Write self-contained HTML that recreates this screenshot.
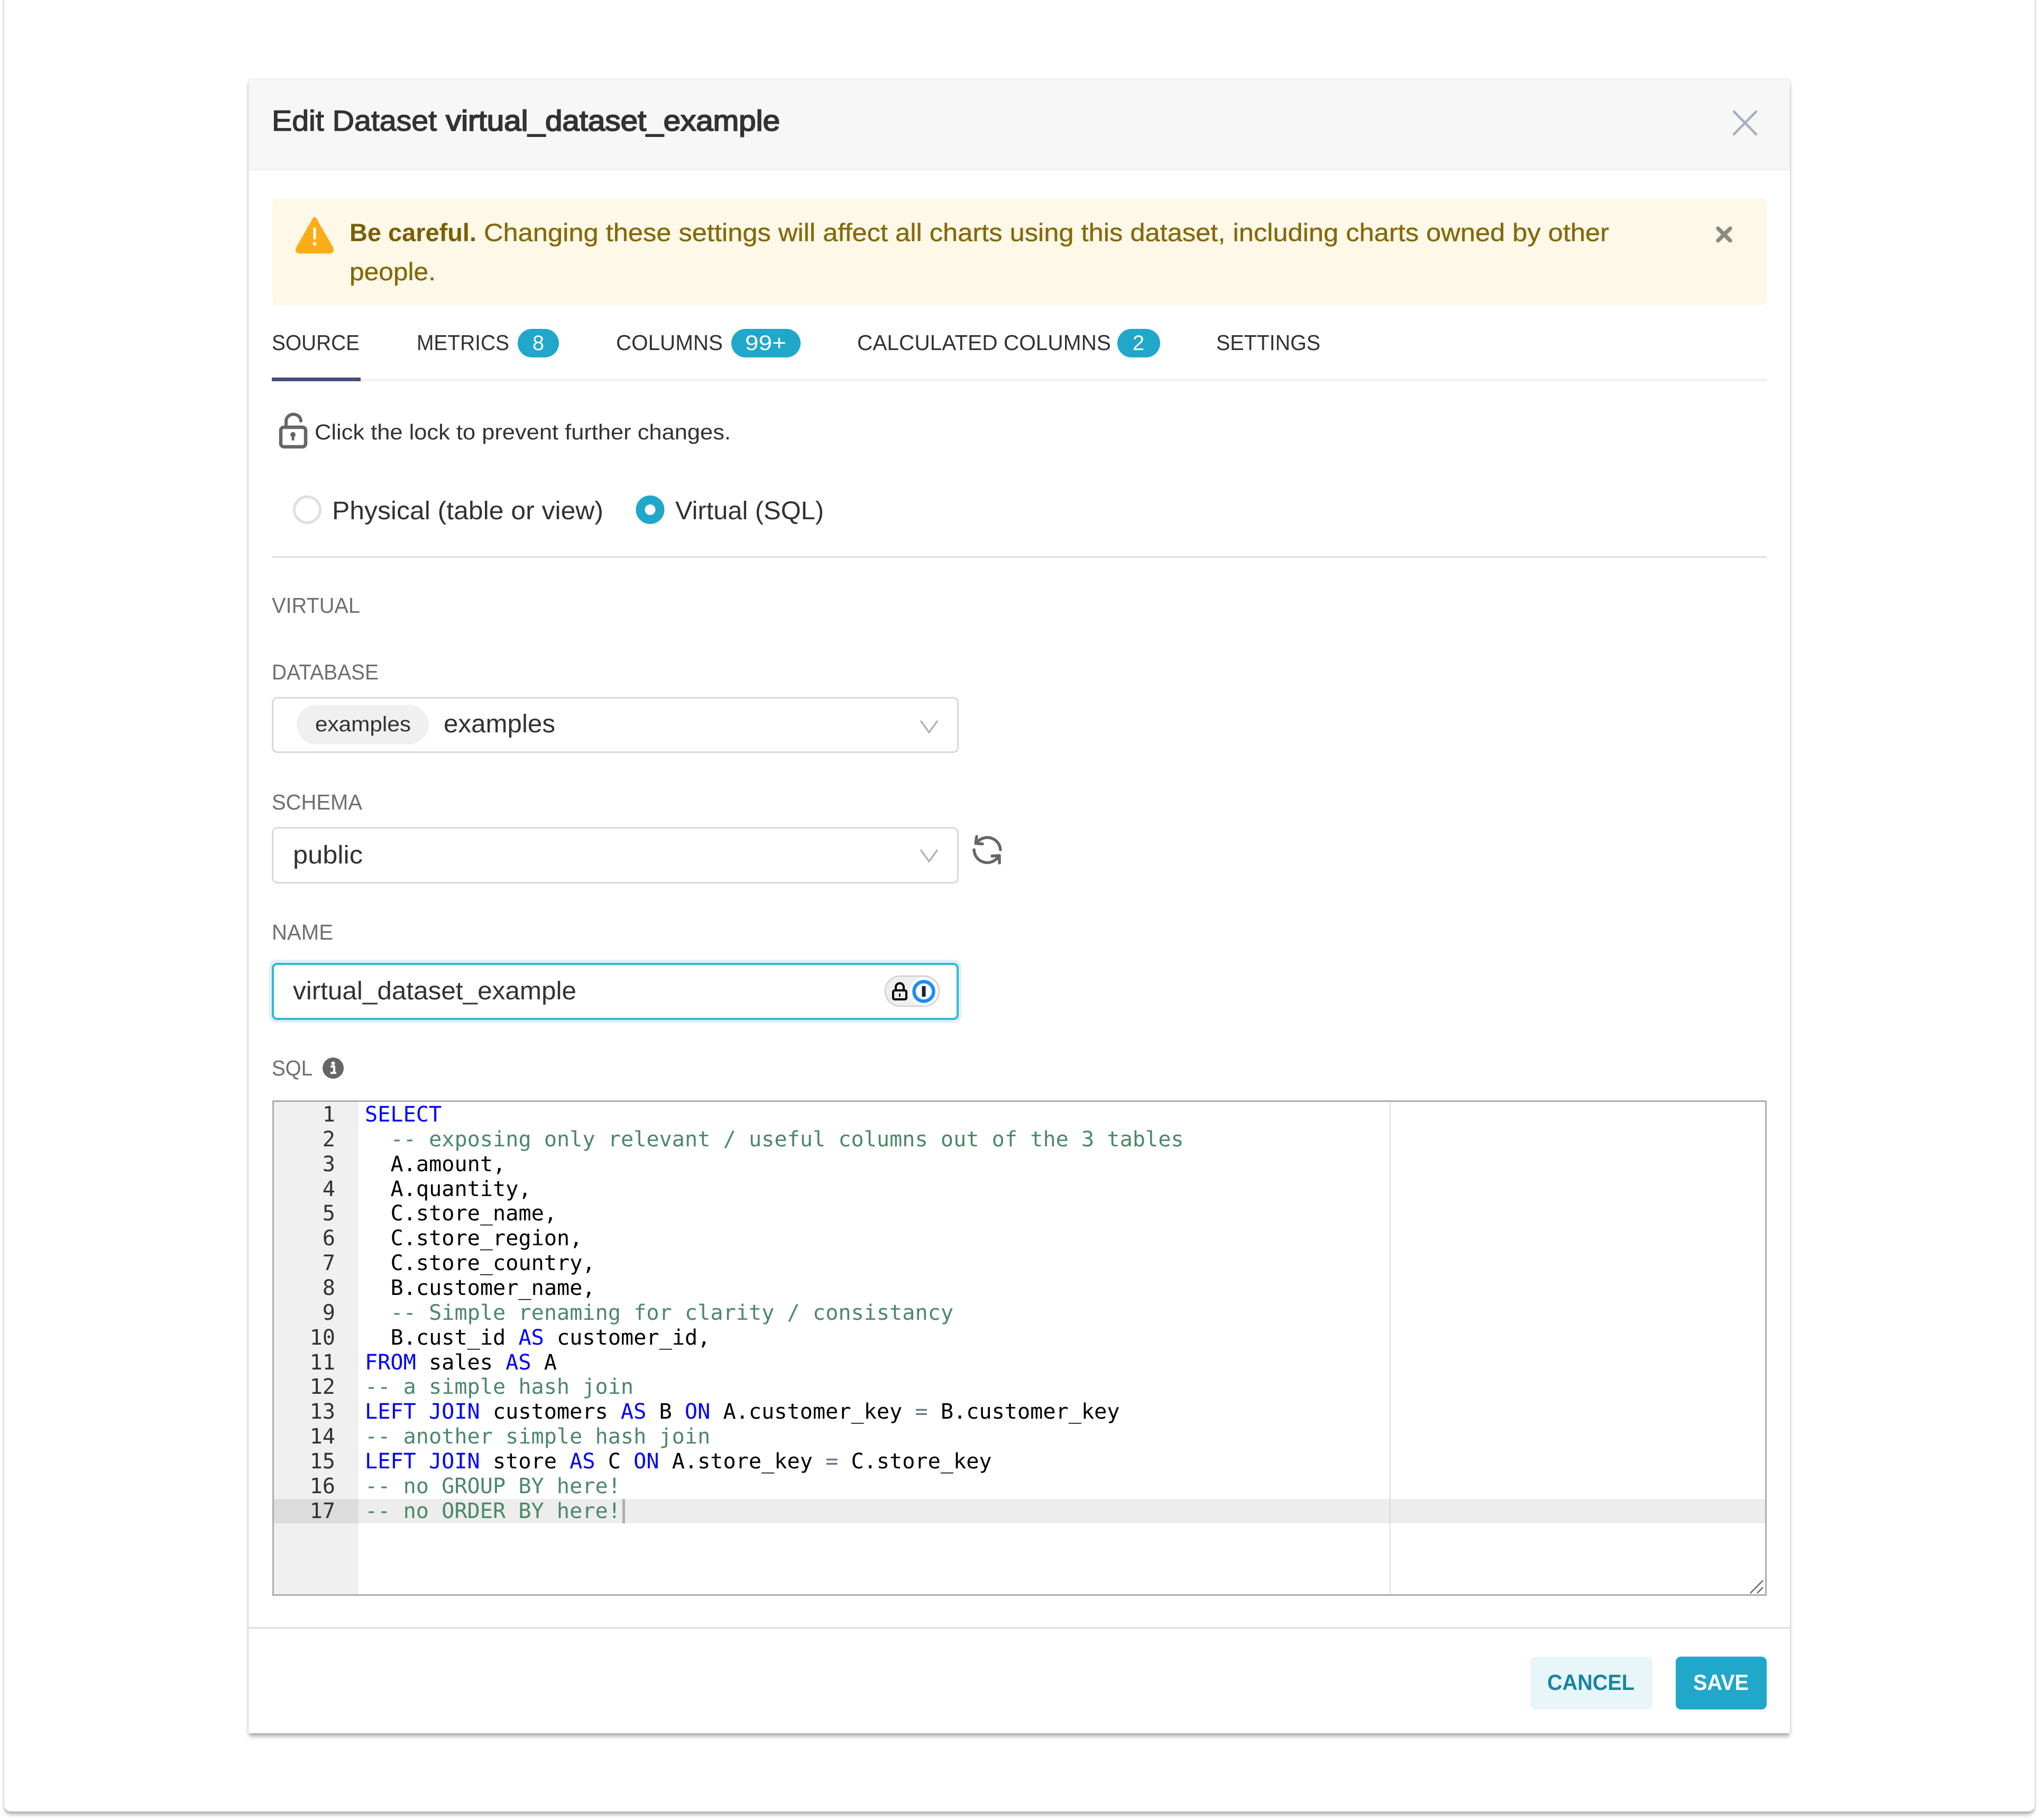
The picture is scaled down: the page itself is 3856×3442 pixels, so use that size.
<!DOCTYPE html>
<html lang="en">
<head>
<meta charset="utf-8">
<title>Edit Dataset virtual_dataset_example</title>
<style>
html,body{margin:0;padding:0;background:#fff;width:3856px;height:3442px;overflow:hidden}
.card{position:absolute;left:8px;top:-20px;width:3840px;height:3446px;background:#fff;border-radius:12px;box-shadow:0 7px 7px -1px rgba(0,0,0,.28),0 0 4px rgba(0,0,0,.18)}
.modal{position:absolute;left:470px;top:150px;width:2915px;height:3128px;background:#fff;box-shadow:0 7px 7px -1px rgba(0,0,0,.3),0 0 4px rgba(0,0,0,.16)}
svg{position:absolute;left:0;top:0;display:block}
text{font-family:"Liberation Sans",sans-serif;white-space:pre}
.mono text{font-family:"DejaVu Sans Mono",monospace;font-size:40.2px;fill:#000}
.mono .c{fill:#4c886b}.mono .k,.k{fill:#0000ff}.o{fill:#687687}
.mono.g text{fill:#333;text-anchor:end}
.lbl{font-size:41px;fill:#6f6f6f}
.tab{font-size:41px;fill:#323232}
.bd{font-size:40px;fill:#fff;text-anchor:middle}
</style>
</head>
<body>
<div class="card"></div>
<div class="modal"></div>
<svg width="3856" height="3442" viewBox="0 0 3856 3442" xmlns="http://www.w3.org/2000/svg">
<!-- header -->
<rect x="470" y="150" width="2915" height="170" fill="#f7f7f7"/>
<rect x="470" y="319" width="2915" height="3" fill="#f0f0f0"/>
<text x="514" y="247" font-size="55" fill="#323232" stroke="#323232" stroke-width="1.400" textLength="312" lengthAdjust="spacingAndGlyphs">Edit Dataset</text>
<text x="843" y="247" font-size="55" fill="#323232" stroke="#323232" stroke-width="2" textLength="632" lengthAdjust="spacingAndGlyphs">virtual_dataset_example</text>
<path d="M3279 211L3321 254M3321 211L3279 254" stroke="#a9adbf" stroke-width="4.500" fill="none" stroke-linecap="round"/>

<!-- alert -->
<rect x="515" y="376" width="2826" height="201" rx="6" fill="#fdf8e7"/>
<path d="M595 414 L627 470 Q629 476 623 476 L567 476 Q561 476 563 470 Z" fill="#fcac17" stroke="#fcac17" stroke-width="7" stroke-linejoin="round"/>
<rect x="592.500" y="430" width="5" height="23" rx="2.500" fill="#fff"/>
<circle cx="595" cy="461" r="3.500" fill="#fff"/>
<text x="661" y="456" font-size="47" font-weight="bold" fill="#7a5f05" textLength="240" lengthAdjust="spacingAndGlyphs">Be careful.</text>
<text x="915" y="456" font-size="47" fill="#85690b" stroke="#85690b" stroke-width=".4" textLength="2128" lengthAdjust="spacingAndGlyphs">Changing these settings will affect all charts using this dataset, including charts owned by other</text>
<text x="661" y="530" font-size="47" fill="#85690b" stroke="#85690b" stroke-width=".4" textLength="163" lengthAdjust="spacingAndGlyphs">people.</text>
<path d="M3249 432L3272 455M3272 432L3249 455" stroke="#8a8a80" stroke-width="7.500" fill="none" stroke-linecap="round"/>

<!-- tabs -->
<text class="tab" x="514" y="662" textLength="166" lengthAdjust="spacingAndGlyphs">SOURCE</text>
<text class="tab" x="788" y="662" textLength="175" lengthAdjust="spacingAndGlyphs">METRICS</text>
<rect x="979" y="622" width="78" height="54" rx="27" fill="#20a7c9"/>
<text class="bd" x="1018" y="662">8</text>
<text class="tab" x="1165" y="662" textLength="202" lengthAdjust="spacingAndGlyphs">COLUMNS</text>
<rect x="1383" y="622" width="131" height="54" rx="27" fill="#20a7c9"/>
<text class="bd" x="1448" y="662" textLength="78" lengthAdjust="spacingAndGlyphs">99+</text>
<text class="tab" x="1621" y="662" textLength="480" lengthAdjust="spacingAndGlyphs">CALCULATED COLUMNS</text>
<rect x="2113" y="622" width="81" height="54" rx="27" fill="#20a7c9"/>
<text class="bd" x="2153" y="662">2</text>
<text class="tab" x="2300" y="662" textLength="197" lengthAdjust="spacingAndGlyphs">SETTINGS</text>
<rect x="515" y="717" width="2826" height="4" fill="#f0f0f0"/>
<rect x="514" y="714" width="168" height="7" fill="#444e7c"/>

<!-- lock row -->
<rect x="531" y="808" width="47" height="37" rx="6" fill="none" stroke="#666" stroke-width="6.500"/>
<path d="M541 806V797a14 13 0 0 1 28 -1" fill="none" stroke="#666" stroke-width="6" stroke-linecap="round"/>
<circle cx="554" cy="822" r="5" fill="#666"/>
<rect x="551.500" y="823" width="5" height="10" fill="#666"/>
<text x="595" y="831" font-size="41" fill="#323232" textLength="787" lengthAdjust="spacingAndGlyphs">Click the lock to prevent further changes.</text>

<!-- radios -->
<circle cx="581" cy="964" r="24.500" fill="#fff" stroke="#e0e0e0" stroke-width="5"/>
<text x="628" y="982" font-size="48" fill="#323232" textLength="513" lengthAdjust="spacingAndGlyphs">Physical (table or view)</text>
<circle cx="1229.500" cy="964" r="18.500" fill="#fff" stroke="#20a7c9" stroke-width="17"/>
<text x="1277" y="982" font-size="48" fill="#323232" textLength="281" lengthAdjust="spacingAndGlyphs">Virtual (SQL)</text>
<rect x="515" y="1052" width="2826" height="3" fill="#e0e0e0"/>

<text class="lbl" x="514" y="1159" textLength="167" lengthAdjust="spacingAndGlyphs">VIRTUAL</text>

<!-- database -->
<text class="lbl" x="514" y="1285" textLength="202" lengthAdjust="spacingAndGlyphs">DATABASE</text>
<rect x="515.500" y="1319.500" width="1296" height="103" rx="9" fill="#fff" stroke="#d9d9d9" stroke-width="3"/>
<rect x="561" y="1333" width="250" height="75" rx="37.500" fill="#f0f0f0"/>
<text x="596" y="1383" font-size="40" fill="#323232" textLength="181" lengthAdjust="spacingAndGlyphs">examples</text>
<text x="839" y="1385" font-size="48" fill="#323232" textLength="211" lengthAdjust="spacingAndGlyphs">examples</text>
<path d="M1741 1363L1757 1385L1773 1363" fill="none" stroke="#b5b5b5" stroke-width="3.500"/>

<!-- schema -->
<text class="lbl" x="514" y="1531" textLength="171" lengthAdjust="spacingAndGlyphs">SCHEMA</text>
<rect x="515.500" y="1565.500" width="1296" height="104" rx="9" fill="#fff" stroke="#d9d9d9" stroke-width="3"/>
<text x="554" y="1633" font-size="48" fill="#323232" textLength="132" lengthAdjust="spacingAndGlyphs">public</text>
<path d="M1741 1607L1757 1629L1773 1607" fill="none" stroke="#b5b5b5" stroke-width="3.500"/>
<g fill="none" stroke="#666" stroke-width="5.500" stroke-linecap="round" stroke-linejoin="round">
<path d="M1847 1594A25 25 0 0 1 1892 1607"/>
<path d="M1847 1582L1845 1595L1858 1596"/>
<path d="M1842 1607A25 25 0 0 0 1888 1620"/>
<path d="M1876 1619L1890 1618L1890 1632"/>
</g>

<!-- name -->
<text class="lbl" x="514" y="1777" textLength="116" lengthAdjust="spacingAndGlyphs">NAME</text>
<rect x="509" y="1815" width="1309" height="119" rx="14" fill="#dff1f5"/>
<rect x="516" y="1823" width="1295" height="104" rx="8" fill="#fff" stroke="#33b8d6" stroke-width="4"/>
<text x="554" y="1890" font-size="48" fill="#323232" textLength="536" lengthAdjust="spacingAndGlyphs">virtual_dataset_example</text>
<rect x="1674" y="1846" width="102" height="57" rx="28.500" fill="#efefef" stroke="#d0d0d0" stroke-width="2.500"/>
<circle cx="1747" cy="1875" r="27" fill="#fff"/>
<rect x="1689" y="1873" width="25" height="17" rx="3" fill="none" stroke="#000" stroke-width="4"/>
<path d="M1694 1872V1867a7.500 7.500 0 0 1 15 0V1872" fill="none" stroke="#000" stroke-width="4"/>
<rect x="1700" y="1879" width="3" height="6" fill="#000"/>
<circle cx="1747" cy="1875" r="18.500" fill="#fff" stroke="#1a8cff" stroke-width="6.500"/>
<rect x="1743.500" y="1865" width="7" height="20" fill="#222"/>

<!-- sql label -->
<text class="lbl" x="514" y="2034" textLength="77" lengthAdjust="spacingAndGlyphs">SQL</text>
<circle cx="630" cy="2020" r="20" fill="#666"/>
<circle cx="630" cy="2011" r="3.500" fill="#fff"/>
<path d="M625 2017H632V2028M625 2029H636" fill="none" stroke="#fff" stroke-width="4"/>

<!-- editor -->
<rect x="518" y="2084" width="2820" height="931" fill="#fff"/>
<rect x="518" y="2084" width="160" height="931" fill="#f0f0f0"/>
<rect x="678" y="2835" width="2660" height="46" fill="#ededed"/>
<rect x="518" y="2835" width="160" height="46" fill="#dcdcdc"/>
<rect x="2627" y="2084" width="3" height="931" fill="#e8e8e8"/>
<rect x="2627" y="2835" width="3" height="46" fill="#dcdcdc"/>
<rect x="1177" y="2835" width="5" height="46" fill="#aeaeae"/>
<rect x="516.500" y="2082.500" width="2823" height="934" fill="none" stroke="#adadad" stroke-width="3"/>
<path d="M3310 3013L3334 2989M3323 3013L3334 3002" stroke="#666" stroke-width="2.500" fill="none"/>

<g class="mono g">
<text x="634" y="2121">1</text>
<text x="634" y="2168">2</text>
<text x="634" y="2215">3</text>
<text x="634" y="2262">4</text>
<text x="634" y="2308">5</text>
<text x="634" y="2355">6</text>
<text x="634" y="2402">7</text>
<text x="634" y="2449">8</text>
<text x="634" y="2496">9</text>
<text x="634" y="2543">10</text>
<text x="634" y="2590">11</text>
<text x="634" y="2636">12</text>
<text x="634" y="2683">13</text>
<text x="634" y="2730">14</text>
<text x="634" y="2777">15</text>
<text x="634" y="2824">16</text>
<text x="634" y="2871">17</text>
</g>
<g class="mono">
<text x="690" y="2121" class="k">SELECT</text>
<text x="738.500" y="2168" class="c">-- exposing only relevant / useful columns out of the 3 tables</text>
<text x="738.500" y="2215">A.amount,</text>
<text x="738.500" y="2262">A.quantity,</text>
<text x="738.500" y="2308">C.store_name,</text>
<text x="738.500" y="2355">C.store_region,</text>
<text x="738.500" y="2402">C.store_country,</text>
<text x="738.500" y="2449">B.customer_name,</text>
<text x="738.500" y="2496" class="c">-- Simple renaming for clarity / consistancy</text>
<text x="738.500" y="2543">B.cust_id <tspan class="k">AS</tspan> customer_id,</text>
<text x="690" y="2590"><tspan class="k">FROM</tspan> sales <tspan class="k">AS</tspan> A</text>
<text x="690" y="2636" class="c">-- a simple hash join</text>
<text x="690" y="2683"><tspan class="k">LEFT JOIN</tspan> customers <tspan class="k">AS</tspan> B <tspan class="k">ON</tspan> A.customer_key <tspan class="o">=</tspan> B.customer_key</text>
<text x="690" y="2730" class="c">-- another simple hash join</text>
<text x="690" y="2777"><tspan class="k">LEFT JOIN</tspan> store <tspan class="k">AS</tspan> C <tspan class="k">ON</tspan> A.store_key <tspan class="o">=</tspan> C.store_key</text>
<text x="690" y="2824" class="c">-- no GROUP BY here!</text>
<text x="690" y="2871" class="c">-- no ORDER BY here!</text>
</g>

<!-- footer -->
<rect x="470" y="3077" width="2915" height="3" fill="#e0e0e0"/>
<rect x="2894" y="3133" width="231" height="100" rx="10" fill="#e8f6f9"/>
<text x="2926" y="3196" font-size="42" font-weight="bold" fill="#1985a0" textLength="165" lengthAdjust="spacingAndGlyphs">CANCEL</text>
<rect x="3169" y="3133" width="172" height="100" rx="10" fill="#20a7c9"/>
<text x="3202" y="3196" font-size="42" font-weight="bold" fill="#fff" textLength="105" lengthAdjust="spacingAndGlyphs">SAVE</text>
</svg>
</body>
</html>
